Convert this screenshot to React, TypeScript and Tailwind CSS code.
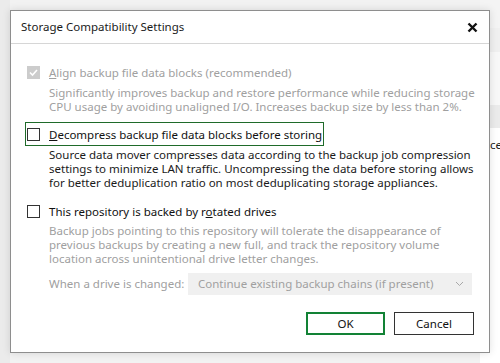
import React from "react";

const font = { fontFamily: '"Noto Sans", "Segoe UI", sans-serif' };

function Box({ checked, disabled }: { checked?: boolean; disabled?: boolean }) {
  if (checked && disabled) {
    return (
      <div className="w-[13px] h-[13px] bg-[#cccccc] flex items-center justify-center shrink-0">
        <svg width="11" height="11" viewBox="0 0 11 11">
          <path d="M2 5.5 L4.5 8 L9 3" stroke="#ffffff" strokeWidth="1.6" fill="none" />
        </svg>
      </div>
    );
  }
  return <div className="w-[13px] h-[13px] border border-[#333333] bg-white shrink-0" />;
}

export default function App() {
  return (
    <div className="relative w-[500px] h-[363px] overflow-hidden bg-[#f2f2f2] whitespace-nowrap" style={font}>
      {/* background app content on the right */}
      <div className="absolute left-[480px] top-0 w-[20px] h-[363px] flex flex-col bg-white">
        <div className="h-[28px] bg-[#f4f4f4]" />
        <div className="h-[24px] bg-[#f0f0f0]" />
        <div className="h-[53px] bg-[#f8f8f8]" />
        <div className="h-[23px] bg-[#ebebeb]" />
        <div className="h-[34px] bg-white text-[11.5px] leading-[34px] pl-[10px] text-[#222]">ce</div>
        <div className="flex-1 bg-white" />
      </div>
      <div className="absolute left-0 top-0 w-[10px] h-[363px] bg-[#ebebeb]" />

      {/* dialog */}
      <div className="absolute left-[10px] top-[10px] w-[480px] h-[343px] border border-[#8e8e8e] bg-white shadow-[0_0_8px_rgba(0,0,0,0.12)] flex flex-col text-[11.5px] text-[#1a1a1a]">
        <div className="h-[33px] shrink-0 border-b border-[#d6d6d6] flex items-center justify-between pl-[10px] pr-[10px]">
          <span className="text-[11.5px] text-[#1a1a1a]">Storage Compatibility Settings</span>
          <svg width="11" height="11" viewBox="0 0 11 11" className="mr-[1px]">
            <path d="M1.5 1.5 L9.5 9.5 M9.5 1.5 L1.5 9.5" stroke="#111" strokeWidth="2.4" />
          </svg>
        </div>

        <div className="flex flex-col pl-[16px] pr-[15px] pt-[21px]">
          <div className="flex items-center h-[15px]">
            <Box checked disabled />
            <span className="ml-[9px] leading-[15px] text-[#a0a0a0]">
              <span className="underline">A</span>lign backup file data blocks (recommended)
            </span>
          </div>
          <div className="mt-[6px] ml-[22px] leading-[14px] text-[#a0a0a0]">
            Significantly improves backup and restore performance while reducing storage
            <br />
            CPU usage by avoiding unaligned I/O. Increases backup size by less than 2%.
          </div>

          <div className="mt-[8px] -ml-[2px] self-start h-[24px] border border-[#1f6b2a] flex items-center pl-[1px] pr-[1px]">
            <Box />
            <span className="ml-[9px] leading-[15px] text-[#111]">
              <span className="underline">D</span>ecompress backup file data blocks before storing
            </span>
          </div>
          <div className="mt-[2px] ml-[22px] leading-[14px] text-[#1a1a1a]">
            Source data mover compresses data according to the backup job compression
            <br />
            settings to minimize LAN traffic. Uncompressing the data before storing allows
            <br />
            for better deduplication ratio on most deduplicating storage appliances.
          </div>

          <div className="mt-[14px] flex items-center h-[15px]">
            <Box />
            <span className="ml-[9px] leading-[15px] text-[#111]">
              This repository is backed by r<span className="underline">o</span>tated drives
            </span>
          </div>
          <div className="mt-[5px] ml-[22px] leading-[14px] text-[#a0a0a0]">
            Backup jobs pointing to this repository will tolerate the disappearance of
            <br />
            previous backups by creating a new full, and track the repository volume
            <br />
            location across unintentional drive letter changes.
          </div>

          <div className="mt-[7px] ml-[22px] flex items-center h-[22px]">
            <span className="w-[139px] text-[#a0a0a0]">When a drive is changed:</span>
            <div className="w-[284px] h-[22px] bg-[#f0f0f0] flex items-center justify-between pl-[10px] pr-[8px] text-[#a0a0a0]">
              <span>Continue existing backup chains (if present)</span>
              <svg width="9" height="6" viewBox="0 0 9 6">
                <path d="M1 1 L4.5 4.5 L8 1" stroke="#a8a8a8" strokeWidth="1" fill="none" />
              </svg>
            </div>
          </div>

          <div className="mt-[17px] flex justify-end gap-[9px]">
            <button className="w-[79px] h-[23px] border-2 border-[#128235] bg-white text-[11.5px] text-[#111] flex items-center justify-center">
              OK
            </button>
            <button className="w-[80px] h-[23px] border border-[#333333] bg-white text-[11.5px] text-[#111] flex items-center justify-center">
              Cancel
            </button>
          </div>
        </div>
      </div>
    </div>
  );
}
